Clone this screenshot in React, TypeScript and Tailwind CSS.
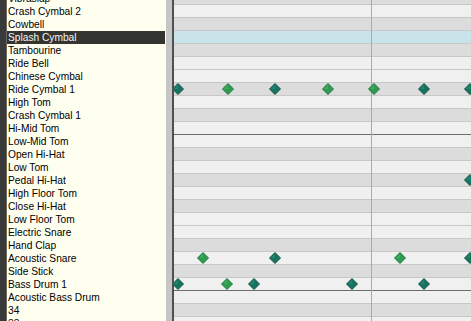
import React from "react";

// drum names from MIDI note 58 down to 33
const notes: { n: number; name: string }[] = [
  { n: 58, name: "Vibraslap" },
  { n: 57, name: "Crash Cymbal 2" },
  { n: 56, name: "Cowbell" },
  { n: 55, name: "Splash Cymbal" },
  { n: 54, name: "Tambourine" },
  { n: 53, name: "Ride Bell" },
  { n: 52, name: "Chinese Cymbal" },
  { n: 51, name: "Ride Cymbal 1" },
  { n: 50, name: "High Tom" },
  { n: 49, name: "Crash Cymbal 1" },
  { n: 48, name: "Hi-Mid Tom" },
  { n: 47, name: "Low-Mid Tom" },
  { n: 46, name: "Open Hi-Hat" },
  { n: 45, name: "Low Tom" },
  { n: 44, name: "Pedal Hi-Hat" },
  { n: 43, name: "High Floor Tom" },
  { n: 42, name: "Close Hi-Hat" },
  { n: 41, name: "Low Floor Tom" },
  { n: 40, name: "Electric Snare" },
  { n: 39, name: "Hand Clap" },
  { n: 38, name: "Acoustic Snare" },
  { n: 37, name: "Side Stick" },
  { n: 36, name: "Bass Drum 1" },
  { n: 35, name: "Acoustic Bass Drum" },
  { n: 34, name: "34" },
  { n: 33, name: "33" },
];

const SELECTED = 55;
const isBlack = (n: number) => [1, 3, 6, 8, 10].includes(n % 12);

// x is the centre in grid coordinates, dark = teal, else green
const hits: { n: number; x: number; dark: boolean }[] = [
  { n: 51, x: 4, dark: true },
  { n: 51, x: 54, dark: false },
  { n: 51, x: 101, dark: true },
  { n: 51, x: 154, dark: false },
  { n: 51, x: 200, dark: false },
  { n: 51, x: 250, dark: true },
  { n: 51, x: 296, dark: true },
  { n: 44, x: 296, dark: true },
  { n: 38, x: 29, dark: false },
  { n: 38, x: 101, dark: true },
  { n: 38, x: 226, dark: false },
  { n: 38, x: 296, dark: true },
  { n: 36, x: 4, dark: true },
  { n: 36, x: 53, dark: false },
  { n: 36, x: 80, dark: true },
  { n: 36, x: 178, dark: true },
  { n: 36, x: 250, dark: true },
];

const Diamond = ({ dark }: { dark: boolean }) => (
  <svg width="12" height="12" viewBox="0 0 12 12">
    <polygon
      points="6,0.5 11.5,6 6,11.5 0.5,6"
      fill={dark ? "#177360" : "#2f9a50"}
      stroke={dark ? "#0f5645" : "#207a3c"}
      strokeWidth="1"
    />
    <polygon points="6,2 2,6 6,6" fill={dark ? "#218570" : "#42ab60"} />
  </svg>
);

export default function App() {
  return (
    <div className="flex h-[321px] w-[471px] overflow-hidden bg-white font-['Liberation_Sans',Arial,sans-serif] text-[10.2px] leading-[13px] text-black">
      <div className="w-[6px] shrink-0 bg-[#3a3a3a]" />
      <div className="w-[1px] shrink-0 bg-[#6a6a5c]" />

      {/* instrument names */}
      <div className="w-[159px] shrink-0 bg-[#fffff0]">
        <div className="-mt-[8px]">
          {notes.map((r) => (
            <div
              key={r.n}
              className={`h-[13px] whitespace-nowrap pl-[1px] ${
                r.n === SELECTED ? "mr-[1px] bg-[#343430] text-[#f4f4f0]" : ""
              }`}
            >
              {r.name}
            </div>
          ))}
        </div>
      </div>

      <div className="w-[6px] shrink-0 bg-[#c6c6c6]" />
      <div className="w-[2px] shrink-0 bg-[#505050]" />

      {/* note grid */}
      <div className="relative flex-1 overflow-hidden">
        <div className="-mt-[9px]">
          {notes.map((r) => (
            <div
              key={r.n}
              className={`h-[13px] border-t ${
                r.n % 12 === 11 ? "border-[#6c6c6c]" : "border-[#c8c8c8]"
              } ${
                r.n === SELECTED
                  ? "bg-[#c8e3ea]"
                  : isBlack(r.n)
                  ? "bg-[#dcdcdc]"
                  : "bg-[#f0f0f0]"
              }`}
            />
          ))}
        </div>
        <div className="absolute inset-y-0 left-[197px] w-[1px] bg-[#aaaaaa]" />
        {hits.map((h, i) => (
          <div
            key={i}
            className="absolute"
            style={{ left: h.x - 6, top: -8 + (58 - h.n) * 13 }}
          >
            <Diamond dark={h.dark} />
          </div>
        ))}
      </div>
    </div>
  );
}
